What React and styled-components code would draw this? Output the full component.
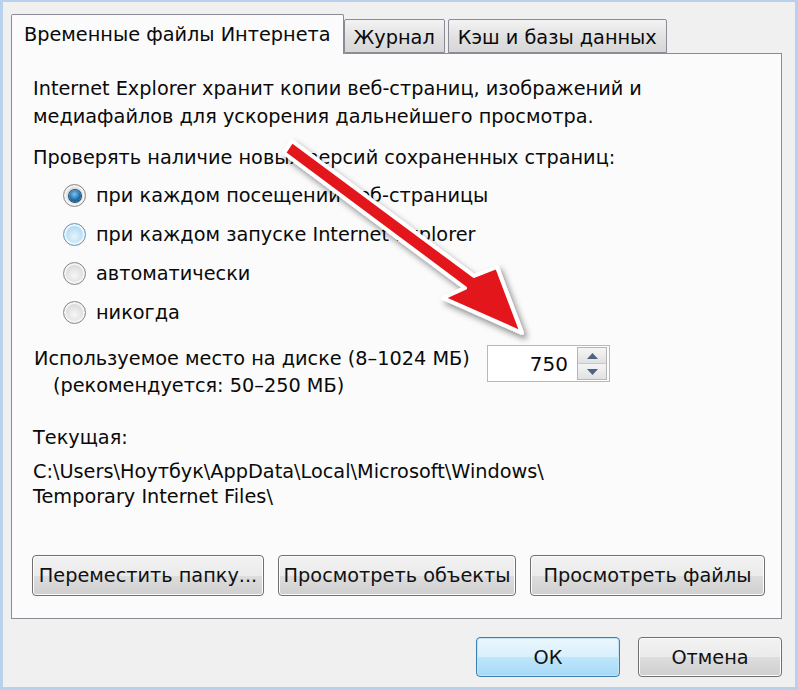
import React from "react";
import styled, { createGlobalStyle } from "styled-components";

const GlobalStyle = createGlobalStyle`
  html, body {
    margin: 0;
    padding: 0;
    background: #f0f0f0;
  }
  * {
    box-sizing: border-box;
  }
`;

const Window = styled.div`
  position: relative;
  width: 798px;
  height: 690px;
  border: 3px solid #b9d1ea;
  border-top-width: 2px;
  background: #f0f0f0;
  padding: 12px 13px 0 8px;
  font-family: "DejaVu Sans", Tahoma, Verdana, sans-serif;
  font-size: 19.3px;
  color: #0a0a0a;
  overflow: hidden;
`;

const TabStrip = styled.div`
  display: flex;
  align-items: flex-end;
  height: 39px;
  position: relative;
  z-index: 2;
`;

const Tab = styled.div`
  height: ${(props) => (props.active ? "40px" : "34px")};
  padding: ${(props) => (props.active ? "0 12px 0 12px" : "0 9px")};
  margin-right: ${(props) => (props.active ? "0" : "3px")};
  margin-bottom: ${(props) => (props.active ? "-1px" : "0")};
  border: 1px solid #898c95;
  border-bottom: ${(props) => (props.active ? "none" : "1px solid #898c95")};
  border-radius: 2px 2px 0 0;
  background: ${(props) =>
    props.active ? "#fbfbfb" : "linear-gradient(#f3f3f3, #e1e1e1 55%, #d6d6d6)"};
  display: flex;
  align-items: center;
  white-space: nowrap;
  padding-top: ${(props) => (props.active ? "0" : "2px")};
`;

const Panel = styled.div`
  height: 566px;
  border: 1px solid #898c95;
  background: #fbfbfb;
  padding: 21px 0 0 21px;
  display: flex;
  flex-direction: column;
`;

const Line = styled.div`
  line-height: ${(props) => props.lh || 28}px;
  margin-top: ${(props) => props.mt || 0}px;
  padding-left: ${(props) => props.indent || 0}px;
  white-space: nowrap;
`;

const RadioList = styled.div`
  display: flex;
  flex-direction: column;
  margin-top: 4px;
  padding-left: 30px;
`;

const RadioRow = styled.label`
  display: flex;
  align-items: center;
  height: 39px;
  gap: 10px;
  white-space: nowrap;
`;

const RadioDot = styled.span`
  width: 23px;
  height: 23px;
  border-radius: 50%;
  border: 1px solid ${(props) => (props.hover ? "#5b9cd0" : "#8a8a8a")};
  background: ${(props) =>
    props.hover
      ? "radial-gradient(circle at 50% 60%, #e6f4fc 0%, #b3dbf2 60%, #a8d2ee 100%)"
      : "radial-gradient(circle at 50% 60%, #f6f6f6 0%, #dcdcdc 60%, #cfcfcf 100%)"};
  box-shadow: inset 0 0 0 2px #f4f4f4;
  display: flex;
  align-items: center;
  justify-content: center;
  flex-shrink: 0;

  &::after {
    content: "";
    display: ${(props) => (props.checked ? "block" : "none")};
    width: 12px;
    height: 12px;
    border-radius: 50%;
    background: radial-gradient(circle at 45% 35%, #7fc3ee 0%, #1e6fa8 55%, #0b3f6a 100%);
    box-shadow: 0 0 0 1px #1f4d74;
  }
`;

const DiskRow = styled.div`
  display: flex;
  align-items: flex-start;
  margin-top: 13px;
`;

const DiskText = styled.div`
  width: 454px;
  display: flex;
  flex-direction: column;
  padding-left: 1px;
`;

const Spinner = styled.div`
  display: flex;
  align-items: center;
  width: 123px;
  height: 37px;
  border: 1px solid #b5b8bf;
  background: #fff;
  padding: 1px 2px 1px 0;
`;

const SpinValue = styled.div`
  flex: 1;
  text-align: right;
  padding-right: 9px;
  font-size: 20px;
`;

const SpinButtons = styled.div`
  display: flex;
  flex-direction: column;
  width: 30px;
  height: 33px;
  border: 1px solid #b6b6b6;
`;

const SpinButton = styled.div`
  flex: 1;
  display: flex;
  align-items: center;
  justify-content: center;
  background: linear-gradient(#f5f5f5, #e1e1e1);
  border-top: ${(props) => (props.down ? "1px solid #c7c7c7" : "none")};
`;

const PathBlock = styled.div`
  display: flex;
  flex-direction: column;
  margin-top: 7px;
`;

const ActionRow = styled.div`
  display: flex;
  margin-top: 46px;
  margin-left: -1px;
  gap: 14px;
`;

const Button = styled.div`
  width: ${(props) => props.w}px;
  height: ${(props) => props.h || 41}px;
  border: 1px solid ${(props) => (props.primary ? "#3c7fb1" : "#707070")};
  border-radius: 4px;
  background: ${(props) =>
    props.primary
      ? "linear-gradient(#eaf6fd 0%, #d9f0fc 50%, #bee6fd 51%, #a7d9f5 100%)"
      : "linear-gradient(#f2f2f2 0%, #ebebeb 50%, #dddddd 51%, #cfcfcf 100%)"};
  box-shadow: inset 0 0 0 1px ${(props) => (props.primary ? "#c4e5f6" : "#fcfcfc")};
  display: flex;
  align-items: center;
  justify-content: center;
  white-space: nowrap;
  color: #111;
`;

const Footer = styled.div`
  display: flex;
  justify-content: flex-end;
  gap: 18px;
  margin-top: 18px;
`;

const ArrowLayer = styled.svg`
  position: absolute;
  left: 0;
  top: 0;
  pointer-events: none;
  z-index: 5;
`;

const radios = [
  { label: "при каждом посещении веб-страницы", checked: true },
  { label: "при каждом запуске Internet Explorer", hover: true },
  { label: "автоматически" },
  { label: "никогда" },
];

const App = () => {
  return (
    <>
      <GlobalStyle />
      <Window>
        <TabStrip>
          <Tab active>Временные файлы Интернета</Tab>
          <Tab>Журнал</Tab>
          <Tab>Кэш и базы данных</Tab>
        </TabStrip>
        <Panel>
          <Line>Internet Explorer хранит копии веб-страниц, изображений и</Line>
          <Line>медиафайлов для ускорения дальнейшего просмотра.</Line>
          <Line mt={13}>Проверять наличие новых версий сохраненных страниц:</Line>
          <RadioList>
            {radios.map((r) => (
              <RadioRow key={r.label}>
                <RadioDot checked={r.checked} hover={r.hover} />
                {r.label}
              </RadioRow>
            ))}
          </RadioList>
          <DiskRow>
            <DiskText>
              <Line lh={27}>Используемое место на диске (8–1024 МБ)</Line>
              <Line lh={27} indent={19}>
                (рекомендуется: 50–250 МБ)
              </Line>
            </DiskText>
            <Spinner>
              <SpinValue>750</SpinValue>
              <SpinButtons>
                <SpinButton>
                  <svg width="11" height="6" viewBox="0 0 11 6">
                    <path d="M0 6 L5.5 0 L11 6 Z" fill="#4d6185" />
                  </svg>
                </SpinButton>
                <SpinButton down>
                  <svg width="11" height="6" viewBox="0 0 11 6">
                    <path d="M0 0 L5.5 6 L11 0 Z" fill="#4d6185" />
                  </svg>
                </SpinButton>
              </SpinButtons>
            </Spinner>
          </DiskRow>
          <Line mt={25} lh={28}>
            Текущая:
          </Line>
          <PathBlock>
            <Line lh={25}>C:\Users\Ноутбук\AppData\Local\Microsoft\Windows\</Line>
            <Line lh={25}>Temporary Internet Files\</Line>
          </PathBlock>
          <ActionRow>
            <Button w={232}>Переместить папку...</Button>
            <Button w={238}>Просмотреть объекты</Button>
            <Button w={235}>Просмотреть файлы</Button>
          </ActionRow>
        </Panel>
        <Footer>
          <Button primary w={144} h={40}>
            ОК
          </Button>
          <Button w={144} h={40}>
            Отмена
          </Button>
        </Footer>
        <ArrowLayer width="798" height="690" viewBox="0 0 798 690">
          <defs>
            <filter id="arrowShadow" x="-20%" y="-20%" width="140%" height="140%">
              <feDropShadow dx="3" dy="4" stdDeviation="3" floodColor="#000" floodOpacity="0.45" />
            </filter>
          </defs>
          <polygon
            points="281,151 462,286 440,296 519,331 494,265 471,274 289,139"
            fill="#e3161b"
            stroke="#ffffff"
            strokeWidth="4"
            strokeLinejoin="round"
            filter="url(#arrowShadow)"
          />
        </ArrowLayer>
      </Window>
    </>
  );
};

export default App;
